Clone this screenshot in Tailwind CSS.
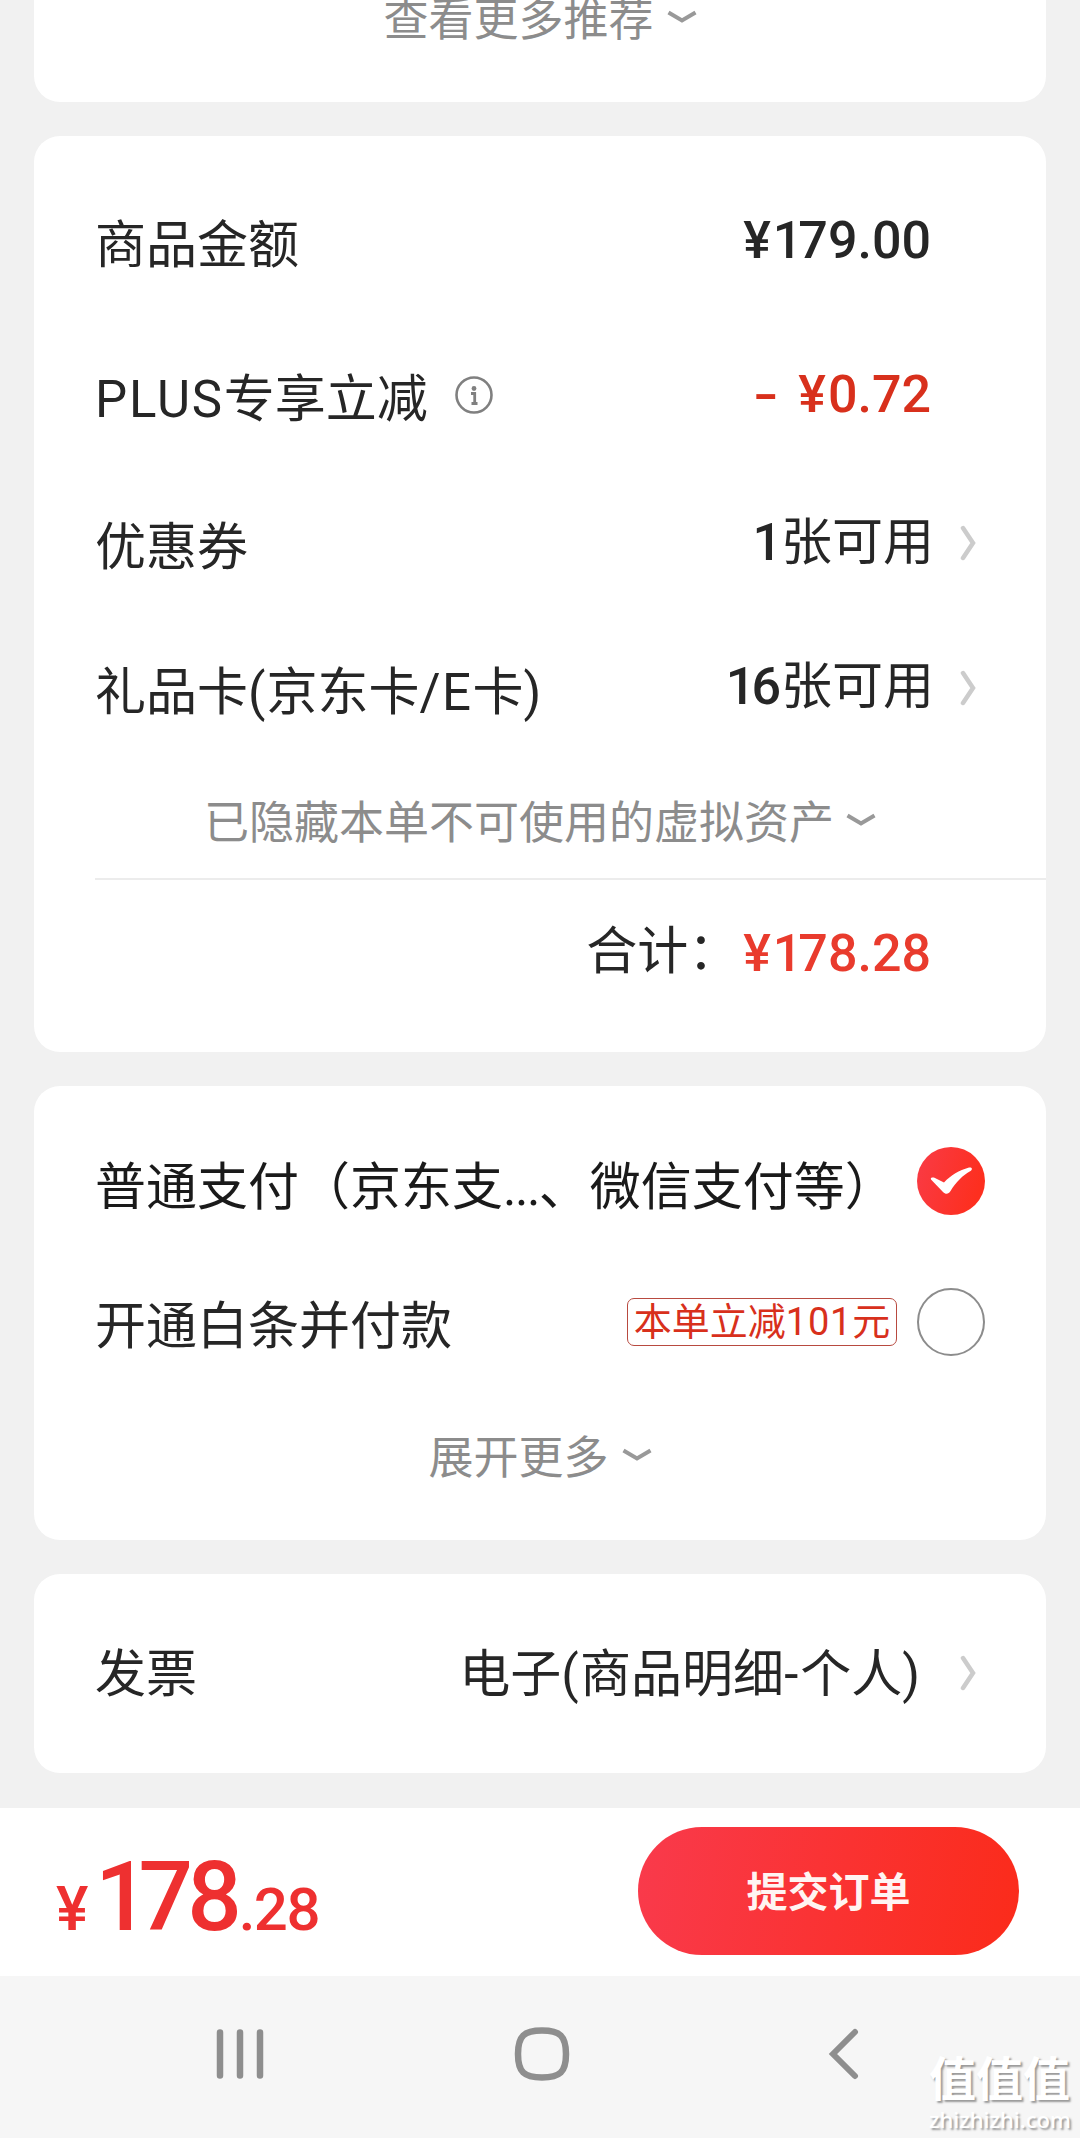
<!DOCTYPE html>
<html lang="zh-CN">
<head>
<meta charset="utf-8">
<title>填写订单</title>
<script src="https://cdn.jsdelivr.net/npm/@tailwindcss/browser@4"></script>
</head>
<body class="bg-[#f1f1f1]">
<div class="flex h-[2138px] w-[1080px] flex-col overflow-hidden bg-[#f1f1f1] font-['Roboto','Noto_Sans_CJK_SC',sans-serif] text-[51px] leading-[60px] whitespace-nowrap text-[#262626]">
  <main class="flex h-[1808px] flex-col gap-[34px] px-[34px]">
    <!-- recommendations -->
    <section class="flex h-[102px] justify-center rounded-b-[26px] bg-white">
      <div class="-mt-[9px] flex h-[60px] items-center gap-[13px] text-[45px] text-[#8c8c8c]">
        <span>查看更多推荐</span>
        <svg class="-mt-[8px] h-[14px] w-[30px]" viewBox="0 0 30 14" fill="none" stroke="#999" stroke-width="4"><path d="M1.500 2.500 15 10.500 28.500 2.500"/></svg>
      </div>
    </section>

    <!-- amounts -->
    <section class="flex h-[916px] flex-col rounded-[26px] bg-white pl-[61px]">
      <div class="mt-[80px] flex h-[60px] justify-between pr-[115px]">
        <span>商品金额</span>
        <span class="-mt-[5px] text-[52px] font-medium"><span class="tracking-[2px]">¥</span><span class="tracking-[-4px]">1</span>79.00</span>
      </div>
      <div class="mt-[94px] flex h-[60px] pr-[115px]">
        <span><span class="tracking-[1.800px]">PLUS</span>专享立减</span>
        <svg class="mt-[6px] ml-[27px] size-[38px]" viewBox="0 0 38 38" fill="none"><circle cx="19" cy="19" r="17.500" stroke="#808080" stroke-width="2.600"/><circle cx="19" cy="12.500" r="2.400" fill="#808080"/><path d="M16 17.500h3.700v10M16.500 27.500h6" stroke="#808080" stroke-width="2.800"/></svg>
        <span class="-mt-[5px] ml-auto flex gap-[24px] text-[52px] font-medium text-[#d8301c]"><span class="inline-block scale-x-140">-</span><span><span class="tracking-[2px]">¥</span>0.72</span></span>
      </div>
      <div class="mt-[88px] flex h-[60px] pr-[70px]">
        <span>优惠券</span>
        <span class="-mt-[5px] ml-auto"><b class="text-[52px] font-medium tracking-[-1px]">1</b>张可用</span>
        <svg class="mt-[6px] ml-[26px] h-[38px] w-[16px]" viewBox="0 0 16 38" fill="none" stroke="#ccc" stroke-width="4.500" stroke-linecap="round"><path d="M3 4 13 19 3 34"/></svg>
      </div>
      <div class="mt-[85px] flex h-[60px] pr-[70px]">
        <span>礼品卡<span class="tracking-[1px]">(</span>京东卡<span class="tracking-[1.500px]">/E</span>卡)</span>
        <span class="-mt-[6px] ml-auto"><b class="text-[52px] font-medium"><span class="tracking-[-4px]">1</span>6</b>张可用</span>
        <svg class="mt-[6px] ml-[26px] h-[38px] w-[16px]" viewBox="0 0 16 38" fill="none" stroke="#ccc" stroke-width="4.500" stroke-linecap="round"><path d="M3 4 13 19 3 34"/></svg>
      </div>
      <div class="mt-[71px] flex h-[60px] items-center gap-[12px] pl-[109px] text-[45px] text-[#8c8c8c]">
        <span>已隐藏本单不可使用的虚拟资产</span>
        <svg class="-mt-[8px] h-[14px] w-[30px]" viewBox="0 0 30 14" fill="none" stroke="#999" stroke-width="4"><path d="M1.500 2.500 15 10.500 28.500 2.500"/></svg>
      </div>
      <div class="mt-[24px] h-[2px] shrink-0 bg-[#ececec]"></div>
      <div class="mt-[42px] flex h-[60px] justify-end pr-[115px]">
        <span>合计：</span>
        <span class="mt-[2px] ml-[4px] text-[52px] font-medium text-[#e93b2d]"><span class="tracking-[2px]">¥</span><span class="tracking-[-4px]">1</span>78.28</span>
      </div>
    </section>

    <!-- payment methods -->
    <section class="flex h-[454px] flex-col rounded-[26px] bg-white pr-[61px] pl-[61px]">
      <div class="mt-[61px] flex h-[68px] justify-between">
        <span class="mt-[11px] text-[#1a1a1a]">普通支付（京东支<span class="tracking-[-1.500px]">...</span>、微信支付等）</span>
        <svg class="-ml-[30px] size-[68px]" viewBox="0 0 68 68"><defs><linearGradient id="dot" x1="0" y1="0" x2="1" y2=".3"><stop stop-color="#f93b46"/><stop offset="1" stop-color="#fd2f1f"/></linearGradient></defs><circle cx="34" cy="34" r="34" fill="url(#dot)"/><path d="M14 32.500C13 30.500 16 30 18 31l9 4.500c7-7.500 15-12 25-15 3-.500 4 1.500 1.500 3.500-8 4.500-14 10.500-20 20-2 3.500-5 3.500-7.500 1z" fill="#fff"/></svg>
      </div>
      <div class="mt-[73px] flex h-[68px]">
        <span class="mt-[9px]">开通白条并付款</span>
        <span class="mt-[10px] mr-[20px] ml-auto flex h-[48px] w-[270px] items-center justify-center rounded-[7px] border-[1.500px] border-[#b84a40] text-[38px] leading-[46px] text-[#d8301c]">本单立减<span class="tracking-[0.8px]">101</span>元</span>
        <span class="size-[68px] rounded-full border-2 border-[#8c8c8c]"></span>
      </div>
      <div class="mt-[73px] flex h-[60px] items-center justify-center gap-[13px] text-[45px] text-[#8c8c8c]">
        <span>展开更多</span>
        <svg class="-mt-[8px] h-[14px] w-[30px]" viewBox="0 0 30 14" fill="none" stroke="#999" stroke-width="4"><path d="M1.500 2.500 15 10.500 28.500 2.500"/></svg>
      </div>
    </section>

    <!-- invoice -->
    <section class="flex h-[199px] rounded-[26px] bg-white pt-[71px] pr-[70px] pl-[61px]">
      <span>发票</span>
      <span class="ml-auto">电子<span class="tracking-[1.500px]">(</span>商品明细<span class="tracking-[2px]">-</span>个人)</span>
      <svg class="mt-[9px] ml-[40px] h-[38px] w-[16px]" viewBox="0 0 16 38" fill="none" stroke="#ccc" stroke-width="4.500" stroke-linecap="round"><path d="M3 4 13 19 3 34"/></svg>
    </section>
  </main>

  <!-- submit bar -->
  <footer class="flex h-[168px] justify-between bg-white pr-[61px] pl-[56px]">
    <div class="flex items-baseline pt-[39px] font-medium leading-[100px] text-[#ee3030]">
      <span class="w-[39px] text-[61px]">¥</span><span class="text-[96px]"><span class="tracking-[-11px]">1</span><span class="tracking-[-6px]">7</span><span class="tracking-[-3px]">8</span></span><span class="text-[60px] tracking-[-1.500px]">.28</span>
    </div>
    <button class="mt-[19px] flex h-[128px] w-[381px] items-center justify-center rounded-full bg-linear-[100deg,#f93a4c,#fb2b1a] pt-[4px] text-[41px] font-bold text-[#fff4f2]">提交订单</button>
  </footer>

  <!-- system navigation -->
  <nav class="relative flex h-[162px] bg-[#f6f6f6] pt-[50px] pl-[214px]">
    <svg class="h-[56px] w-[52px]" viewBox="0 0 52 56" stroke="#8e8e8e" stroke-width="6.500" stroke-linecap="round"><path d="M6 6.500v43M26 6.500v43M46 6.500v43"/></svg>
    <svg class="ml-[248px] size-[56px]" viewBox="0 0 56 56" fill="none" stroke="#8e8e8e" stroke-width="6.500"><path d="M28 4.500C46 4.500 52 10 52 28S46 51.500 28 51.500 4 46 4 28 10 4.500 28 4.500z"/></svg>
    <svg class="ml-[255px] h-[56px] w-[36px]" viewBox="0 0 36 56" fill="none" stroke="#8e8e8e" stroke-width="6" stroke-linecap="round"><path d="M30 6 8 28 30 50"/></svg>
    <div class="absolute top-[76px] left-[929px] flex w-[144px] flex-col text-white [text-shadow:2px_2px_2px_#999]">
      <span class="text-[47px] leading-[56px] font-bold">值值值</span>
      <span class="font-['Noto_Sans'] text-[22px] leading-[22px] font-medium">zhizhizhi.com</span>
    </div>
  </nav>
</div>
</body>
</html>
